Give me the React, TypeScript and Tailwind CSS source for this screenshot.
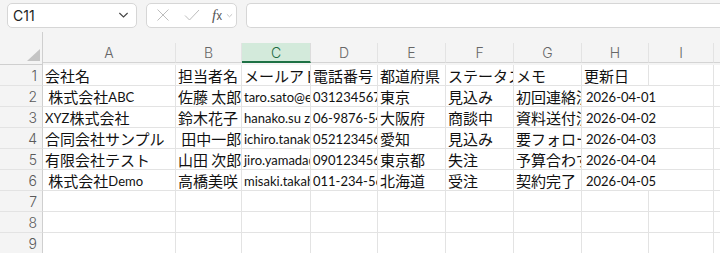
import React from "react";

const COLS = ["A", "B", "C", "D", "E", "F", "G", "H", "I", "J"];

const ROWS: string[][] = [
  ["会社名", "担当者名", "メールアドレス", "電話番号", "都道府県", "ステータス", "メモ", "更新日"],
  [" 株式会社ABC", "佐藤 太郎", "taro.sato@example.com", "0312345678", "東京", "見込み", "初回連絡済み", "2026-04-01"],
  ["XYZ株式会社", "鈴木花子", "hanako.su zuki@example.com", "06-9876-5432", "大阪府", "商談中", "資料送付済み", "2026-04-02"],
  ["合同会社サンプル", " 田中一郎", "ichiro.tanaka@example.com", "0521234567", "愛知", "見込み", "要フォローアップ", "2026-04-03"],
  ["有限会社テスト", "山田 次郎", "jiro.yamada@example.com", "0901234567", "東京都", "失注", "予算合わず", "2026-04-04"],
  [" 株式会社Demo", "高橋美咲", "misaki.takahashi@example.com", "011-234-5678", "北海道", "受注", "契約完了", "2026-04-05"],
  [],
  [],
  [],
  [],
];

// latin runs get a narrower, Calibri-like size
function CellText({ text }: { text: string }) {
  const parts = text.match(/[\x20-\x7e]+|[^\x20-\x7e]+/g) ?? [];
  return (
    <>
      {parts.map((p, i) =>
        /^[\x20-\x7e]+$/.test(p) ? (
          <span key={i} className="relative top-[1px] font-['Lato','Noto_Sans_CJK_JP',sans-serif] text-[13px] whitespace-pre">
            {p}
          </span>
        ) : (
          <span key={i} className="whitespace-pre">{p}</span>
        )
      )}
    </>
  );
}

function Chevron({ className }: { className?: string }) {
  return (
    <svg viewBox="0 0 12 8" className={className} fill="none" stroke="currentColor" strokeWidth="1.2">
      <path d="M1.5 1.8 L6 6.2 L10.5 1.8" />
    </svg>
  );
}

function Toolbar() {
  return (
    <div className="flex items-center h-[30px] bg-[#f4f4f4] pl-[7px] gap-[9px]">
      <div className="flex items-center w-[130px] h-[25px] bg-white border border-[#d6d6d6] rounded-[5px] px-[5px] justify-between">
        <span className="font-['Inter',sans-serif] text-[14px] text-[#222]">C11</span>
        <Chevron className="w-[11px] h-[8px] text-[#444] mr-[2px]" />
      </div>
      <div className="flex items-center w-[91px] h-[25px] bg-white border border-[#d6d6d6] rounded-[5px] pl-[9px] text-[#bdbdbd]">
        <svg viewBox="0 0 14 14" className="w-[14px] h-[14px]" fill="none" stroke="currentColor" strokeWidth="1">
          <path d="M1.5 1.5 L12.5 12.5 M12.5 1.5 L1.5 12.5" />
        </svg>
        <svg viewBox="0 0 16 14" className="w-[16px] h-[14px] ml-[14px]" fill="none" stroke="currentColor" strokeWidth="1">
          <path d="M1 7.5 L5.5 12 L15 2" />
        </svg>
        <span className="ml-[12px] font-['Liberation_Serif',serif] italic text-[15px] leading-none text-[#555]">
          f<span className="text-[11px] not-italic font-['Inter',sans-serif]">x</span>
        </span>
        <Chevron className="w-[7px] h-[5px] ml-[4px] text-[#aaa]" />
      </div>
      <div className="flex-1 h-[25px] bg-white border border-[#d6d6d6] rounded-l-[5px] border-r-0" />
    </div>
  );
}

export default function App() {
  const gridCols = `grid-cols-[43px_133px_66px_69px_67px_68px_68px_68px_67px_65px_60px]`;
  return (
    <div className="w-[720px] h-[253px] overflow-hidden bg-white font-['Noto_Sans_CJK_JP',sans-serif]">
      <Toolbar />
      <div className={`grid ${gridCols} bg-[#f4f4f4]`}>
        <div className="row-span-2 h-[33px] border-r border-b border-[#cfcfcf] relative mt-[2px]">
          <svg viewBox="0 0 13 12" className="absolute right-[2px] bottom-[3px] w-[13px] h-[12px]">
            <path d="M13 0 L13 12 L0 12 Z" fill="#c4c4c4" />
          </svg>
        </div>
        {COLS.map((c) => (
          <div key={c + "s"} className="h-[11px]" />
        ))}
        {COLS.map((c) =>
          c === "C" ? (
            <div
              key={c}
              className="h-[20px] bg-[#d3eadb] border-b-2 border-[#1e7145] border-r border-r-[#dcdcdc] flex items-center justify-center font-['Inter',sans-serif] font-light text-[14px] text-[#1e6b3f]"
            >
              {c}
            </div>
          ) : (
            <div
              key={c}
              className="h-[20px] border-b border-[#d4d4d4] border-r border-r-[#e3e3e3] flex items-center justify-center font-['Inter',sans-serif] font-light text-[14px] text-[#666]"
            >
              {c}
            </div>
          )
        )}
      </div>
      <div className={`grid ${gridCols}`}>
        {ROWS.map((row, r) => (
          <React.Fragment key={r}>
            <div className="h-[21px] bg-[#f4f4f4] border-r border-[#cfcfcf] border-b border-b-[#e3e3e3] flex items-center justify-end pr-[5px] font-['Inter',sans-serif] font-light text-[14px] text-[#5a5a5a]">
              {r + 1}
            </div>
            {COLS.map((c, ci) => {
              // last filled column spills into the empty I column, like Excel does
              const spills = c === "H" && r > 0 && !!row[ci];
              return (
                <div
                  key={c}
                  className={
                    spills
                      ? "h-[21px] border-b border-[#e3e3e3] pl-[4px] flex items-center whitespace-nowrap text-[15px] text-[#111] leading-none"
                      : "h-[21px] border-r border-b border-[#e3e3e3] px-[2px] flex items-center overflow-hidden whitespace-nowrap text-[15px] text-[#111] leading-none"
                  }
                >
                  {row[ci] ? <CellText text={row[ci]} /> : null}
                </div>
              );
            })}
          </React.Fragment>
        ))}
      </div>
    </div>
  );
}
